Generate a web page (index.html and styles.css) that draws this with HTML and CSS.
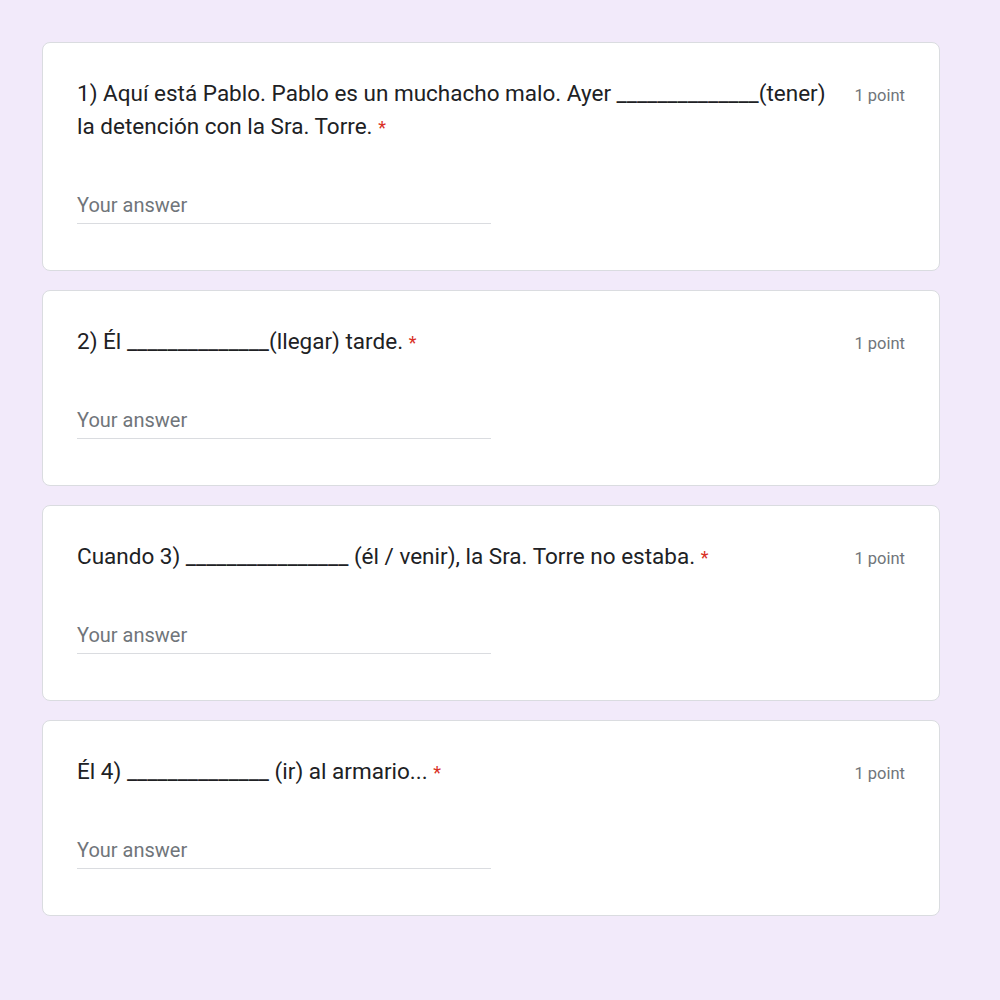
FILE: index.html
```html
<!DOCTYPE html>
<html lang="es">
<head>
<meta charset="utf-8">
<title>Formulario</title>
<link rel="stylesheet" href="styles.css">
</head>
<body>
<main class="form">
  <section class="card">
    <div class="head">
      <div class="q">1) Aquí está Pablo. Pablo es un muchacho malo. Ayer ______________(tener) la detención con la Sra. Torre. <span class="req">*</span></div>
      <div class="pts">1 point</div>
    </div>
    <div class="answer">Your answer</div>
  </section>
  <section class="card">
    <div class="head">
      <div class="q">2) Él ______________(llegar) tarde. <span class="req">*</span></div>
      <div class="pts">1 point</div>
    </div>
    <div class="answer">Your answer</div>
  </section>
  <section class="card">
    <div class="head">
      <div class="q">Cuando 3) ________________ (él / venir), la Sra. Torre no estaba. <span class="req">*</span></div>
      <div class="pts">1 point</div>
    </div>
    <div class="answer">Your answer</div>
  </section>
  <section class="card">
    <div class="head">
      <div class="q">Él 4) ______________ (ir) al armario... <span class="req">*</span></div>
      <div class="pts">1 point</div>
    </div>
    <div class="answer">Your answer</div>
  </section>
</main>
</body>
</html>
```
FILE: styles.css
```css
html, body {
  margin: 0;
  padding: 0;
  background: #f2eafa;
}
body {
  font-family: Roboto, "Liberation Sans", sans-serif;
  color: #202124;
}
.form {
  width: 898px;
  margin: 42px 0 0 42px;
  display: flex;
  flex-direction: column;
  gap: 19px;
}
.card {
  background: #fff;
  border: 1px solid #dadce0;
  border-radius: 8px;
  padding: 34px 34px 46px 34px;
}
.head {
  display: flex;
  justify-content: space-between;
  align-items: flex-start;
  gap: 20px;
}
.q {
  font-size: 22.5px;
  line-height: 33px;
  flex: 1;
}
.req {
  color: #d93025;
  font-size: 18px;
  line-height: 1;
}
.pts {
  font-size: 16.5px;
  line-height: 29px;
  padding-top: 4px;
  color: #70757a;
  white-space: nowrap;
}
.answer {
  width: 414px;
  margin-top: 50px;
  font-size: 20px;
  line-height: 24px;
  padding-bottom: 6px;
  color: #70757a;
  border-bottom: 1px solid #dadce0;
}
```
